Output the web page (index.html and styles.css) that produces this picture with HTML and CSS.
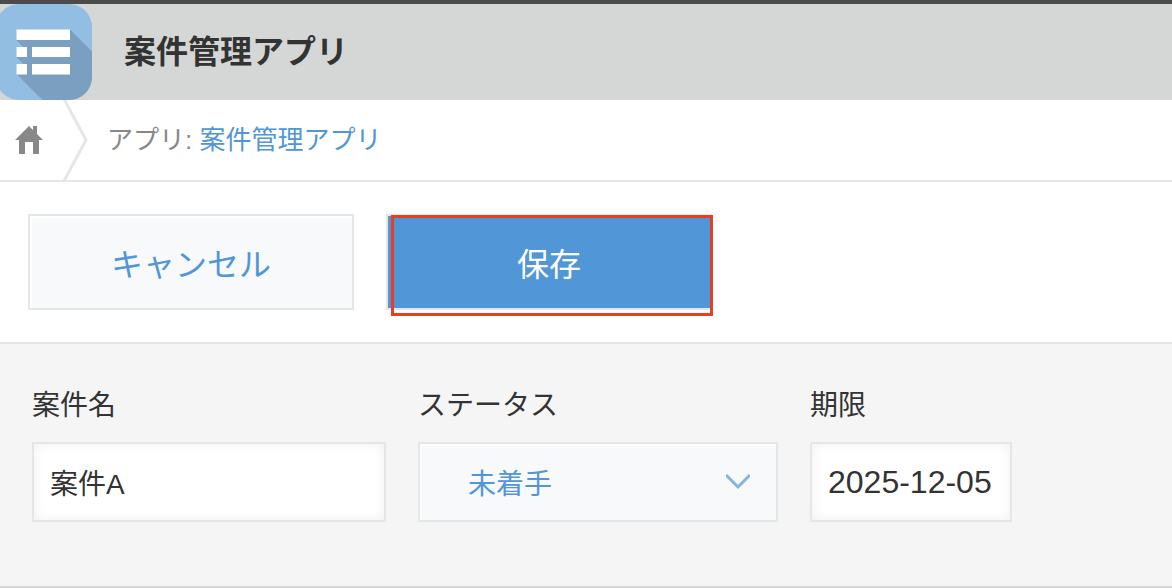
FILE: index.html
```html
<!DOCTYPE html>
<html lang="ja">

<head>
    <meta charset="UTF-8">
    <meta name="viewport" content="width=device-width, initial-scale=1.0">
    <title>案件管理アプリ</title>
    <link rel="stylesheet" href="styles.css">
</head>

<body>
    <header class="app-header">
        <svg class="app-icon" viewBox="4 0 92 96" width="92" height="96" aria-hidden="true">
            <defs>
                <clipPath id="icon-clip">
                    <rect x="0" y="0" width="96" height="96" rx="23" />
                </clipPath>
            </defs>
            <g clip-path="url(#icon-clip)">
                <rect width="96" height="96" fill="#91bee2" />
                <path d="M74 25.500 L96 47.500 V96 H46.500 L20.500 70 L36 66 L20.500 53 L36 49 L20.500 36 Z" fill="#7a9fc0" />
                <path d="M20.500 53 H31 V60 H27.500 Z M20.500 36 H31 V43 H27.500 Z" fill="#7a9fc0" />
                <path d="M31 36 H36 V70 H31 Z" fill="#7a9fc0" />
                <path d="M20.500 25.500 H74 V36 H20.500 Z M20.500 43 H31 V53 H20.500 Z M36 43 H74 V53 H36 Z M20.500 60 H31 V70.500 H20.500 Z M36 60 H74 V70.500 H36 Z" fill="#fff" />
            </g>
        </svg>
        <h1>案件管理アプリ</h1>
    </header>

    <nav class="breadcrumb">
        <a class="home" href="#" aria-label="ホーム">
            <svg viewBox="0 0 28 28" width="28" height="28" aria-hidden="true">
                <path d="M14 0 L18 4 V0 H22 V8 L28 14 H24 V28 H18 V16 H10 V28 H4 V14 H0 Z" fill="#888" />
            </svg>
        </a>
        <svg class="separator" viewBox="0 0 26 80" width="26" height="80" aria-hidden="true">
            <path d="M1 -1 L23 40 L1 81" fill="none" stroke="#e3e7e8" stroke-width="3" />
        </svg>
        <span>アプリ: <a href="#">案件管理アプリ</a></span>
    </nav>

    <form>
        <div class="toolbar">
            <button type="button" class="btn">キャンセル</button>
            <div class="marked">
                <button type="submit" class="btn btn-save">保存</button>
            </div>
        </div>

        <div class="fields">
            <div class="field">
                <label for="name">案件名</label>
                <input type="text" class="control name" id="name" value="案件A">
            </div>
            <div class="field">
                <label for="status">ステータス</label>
                <div class="select">
                    <select class="control" id="status">
                        <option selected>未着手</option>
                    </select>
                    <svg class="arrow" viewBox="0 0 24 16" width="24" height="16" aria-hidden="true">
                        <path d="M0 1 L12 13 L24 1" fill="none" stroke="#84b5e2" stroke-width="3" />
                    </svg>
                </div>
            </div>
            <div class="field">
                <label for="limit">期限</label>
                <input type="text" class="control limit" id="limit" value="2025-12-05">
            </div>
        </div>
    </form>
</body>

</html>
```
FILE: styles.css
```css
* {
    padding: 0;
    margin: 0;
    box-sizing: border-box;
}

body {
    border-top: 4px solid #4b4b4b;
    background: #fff;
    color: #333;
    font-family: 'Liberation Sans', 'Noto Sans CJK JP', sans-serif;
}

a {
    color: #5196d6;
    text-decoration: none;
}

.app-header {
    display: flex;
    align-items: center;
    gap: 32px;
    background: #d5d7d6;
}

.app-icon {
    display: block;
}

h1 {
    font-size: 32px;
    line-height: 48px;
}

.breadcrumb {
    display: flex;
    align-items: center;
    border-bottom: 2px solid #e3e7e8;
    color: #888;
    font-size: 26px;
    line-height: 40px;
}

.home {
    display: flex;
    padding: 0 20px 0 15px;
}

.separator {
    display: block;
    margin-right: 18px;
}

.toolbar {
    display: flex;
    gap: 32px;
    padding: 32px 28px;
    border-bottom: 2px solid #e3e7e8;
}

.btn {
    width: 326px;
    height: 96px;
    border: 2px solid #e3e7e8;
    background: #f7f9fa;
    box-shadow: inset 2px 2px 2px #fff;
    color: #5196d6;
    font-family: inherit;
    font-size: 32px;
}

.btn-save {
    display: block;
    background: #5196d6;
    box-shadow: none;
    color: #fff;
}

.marked {
    position: relative;
}

/* 保存ボタンの赤枠 */
.marked::after {
    content: "";
    position: absolute;
    top: 1px;
    right: -1px;
    bottom: -6px;
    left: 5px;
    border: 3px solid #e83f24;
    pointer-events: none;
}

.fields {
    display: flex;
    flex-wrap: wrap;
    gap: 32px;
    padding: 40px 32px 64px;
    border-bottom: 2px solid #d5d7d6;
    background: #f5f5f5;
}

.field {
    display: flex;
    flex-direction: column;
    gap: 14px;
}

label {
    font-size: 28px;
    line-height: 44px;
}

.control {
    height: 80px;
    padding: 0 16px;
    border: 2px solid #e3e7e8;
    border-radius: 0;
    background: #fff;
    box-shadow: inset 0 0 12px #f0f0f0;
    color: #333;
    font-family: inherit;
    font-size: 28px;
}

.name {
    width: 354px;
}

.limit {
    width: 202px;
    font-size: 32px;
}

.select {
    position: relative;
    width: 360px;
}

.select .control {
    appearance: none;
    width: 100%;
    padding: 4px 48px 0;
    background: #f7f9fa;
    box-shadow: inset 2px 2px 2px #fff;
    color: #5196d6;
}

.arrow {
    position: absolute;
    top: 32px;
    right: 28px;
    pointer-events: none;
}
```
